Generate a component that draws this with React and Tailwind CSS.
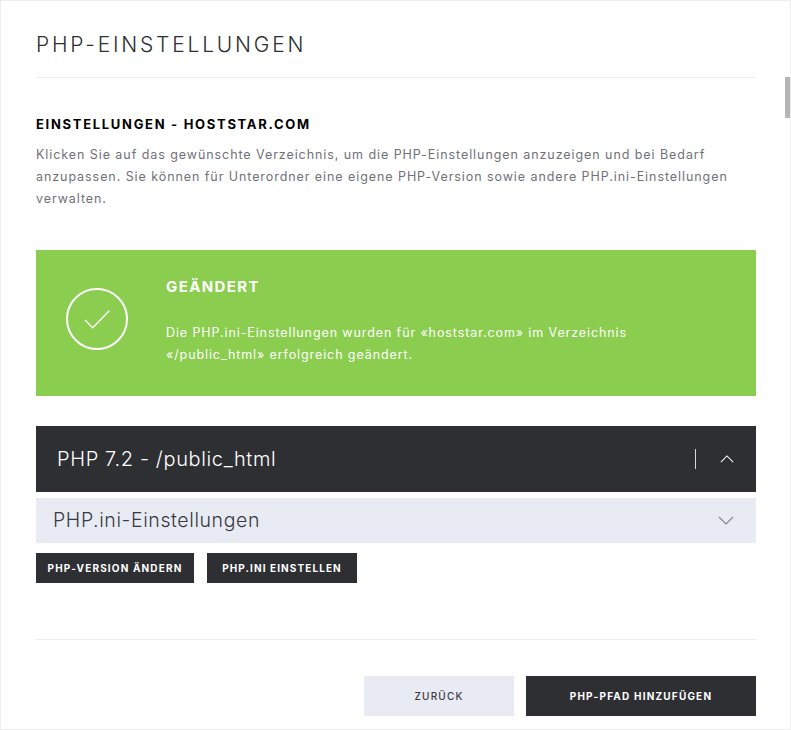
import React from 'react';

const font = "font-['Inter',sans-serif]";

const Check = () => (
  <svg className="w-[62px] h-[62px]" viewBox="0 0 62 62" fill="none" stroke="white">
    <circle cx="31" cy="31" r="30" strokeWidth="2" />
    <path d="M19 32l7.700 7.700L43.300 22.700" strokeWidth="1.400" />
  </svg>
);

const Chevron = ({ up, className }) => (
  <svg className={className} viewBox="0 0 16 9" fill="none" stroke="currentColor" strokeWidth="1.200">
    <path d={up ? 'M1 8l7-7 7 7' : 'M1 1l7 7 7-7'} />
  </svg>
);

export default function App() {
  return (
    <div className={`relative w-[791px] h-[730px] overflow-hidden bg-white border border-[#eeeeee] ${font}`}>
      {/* Scrollbar thumb */}
      <div className="absolute right-0 top-[76px] w-[5px] h-[41px] bg-[#b5b5b5]" />

      <div className="pl-[35px] pr-[34px]">
        <header className="h-[77px] border-b border-[#eceded] pt-[31px]">
          <h1 className="text-[21px] leading-[26px] font-light tracking-[2.800px] text-[#2e2f33]">PHP-EINSTELLUNGEN</h1>
        </header>

        <h2 className="mt-[37px] text-[13px] leading-[18px] font-bold tracking-[1.700px] text-black">EINSTELLUNGEN - HOSTSTAR.COM</h2>
        <p className="mt-[11px] text-[12.500px] leading-[22px] tracking-[0.930px] text-[#717178]">
          Klicken Sie auf das gewünschte Verzeichnis, um die PHP-Einstellungen anzuzeigen und bei Bedarf<br />
          anzupassen. Sie können für Unterordner eine eigene PHP-Version sowie andere PHP.ini-Einstellungen<br />
          verwalten.
        </p>

        <section className="mt-[40px] h-[146px] bg-[#8bcd4e] flex text-white">
          <div className="w-[122px] flex items-center justify-center pb-[8px]"><Check /></div>
          <div className="pt-[27px] pl-[8px]">
            <h3 className="text-[15px] leading-[20px] font-bold tracking-[1.400px]">GEÄNDERT</h3>
            <p className="mt-[25px] text-[12.500px] leading-[22px] tracking-[0.900px]">
              Die PHP.ini-Einstellungen wurden für «hoststar.com» im Verzeichnis<br />
              «/public_html» erfolgreich geändert.
            </p>
          </div>
        </section>

        <div className="mt-[30px] h-[66px] bg-[#2e2f33] flex items-center pl-[21px] text-white">
          <span className="text-[20px] font-light tracking-[0.640px]">PHP 7.2 - /public_html</span>
          <div className="ml-auto w-px h-[20px] bg-[#d8d8d8]" />
          <Chevron up className="w-[14px] h-[8px] ml-[24px] mr-[22px]" />
        </div>

        <div className="mt-[6px] h-[45px] bg-[#e8eaf4] flex items-center pl-[17px] text-[#3a3a40]">
          <span className="text-[19.500px] font-light tracking-[0.600px]">PHP.ini-Einstellungen</span>
          <Chevron className="ml-auto w-[16px] h-[9px] mr-[22px] text-[#85858c]" />
        </div>

        <div className="mt-[10px] flex gap-[13px]">
          <button className="w-[158px] h-[30px] bg-[#2e2f33] text-white text-[10px] font-bold tracking-[1.150px]">PHP-VERSION ÄNDERN</button>
          <button className="w-[150px] h-[30px] bg-[#2e2f33] text-white text-[10px] font-bold tracking-[1.100px]">PHP.INI EINSTELLEN</button>
        </div>

        <div className="mt-[56px] border-t border-[#eceded] pt-[36px] flex justify-end gap-[12px]">
          <button className="w-[150px] h-[40px] bg-[#e8eaf4] text-[#3a3a40] text-[10px] font-medium tracking-[1.200px]">ZURÜCK</button>
          <button className="w-[230px] h-[40px] bg-[#2e2f33] text-white text-[10px] font-bold tracking-[1.200px]">PHP-PFAD HINZUFÜGEN</button>
        </div>
      </div>
    </div>
  );
}
